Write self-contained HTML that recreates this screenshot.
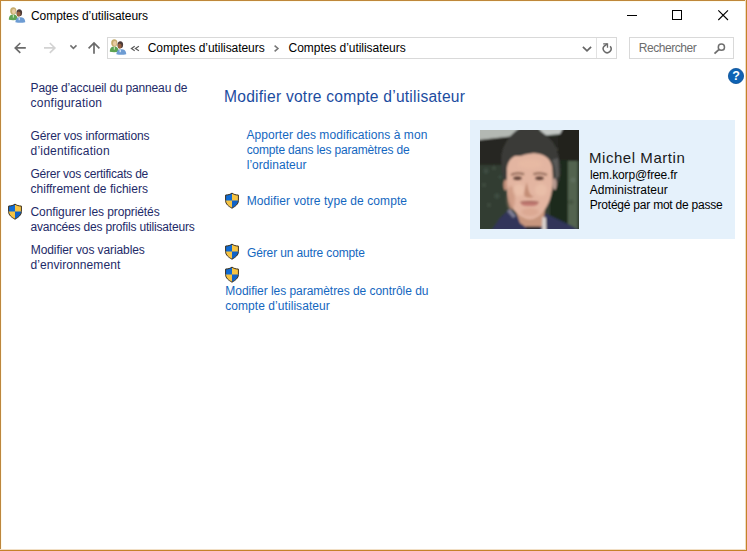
<!DOCTYPE html>
<html lang="fr"><head><meta charset="utf-8"><title>Comptes d’utilisateurs</title>
<style>
html,body{margin:0;padding:0;background:#fff;}
body{width:747px;height:551px;position:relative;overflow:hidden;font-family:"Liberation Sans",sans-serif;font-size:12px;color:#000;}
.t{position:absolute;white-space:nowrap;}
.abs{position:absolute;}
svg{position:absolute;overflow:visible;}
</style></head><body>
<!-- window frame -->
<div class="abs" style="left:0;top:0;width:747px;height:1px;background:#bf873a;"></div>
<div class="abs" style="left:0;top:0;width:1px;height:551px;background:#bd863c;"></div>
<div class="abs" style="left:1px;top:1px;width:745px;height:1px;background:#fffcee;"></div>
<div class="abs" style="left:1px;top:1px;width:1px;height:549px;background:#fffaea;"></div>
<div class="abs" style="left:0;top:549px;width:747px;height:1px;background:#f1dfc6;"></div>
<div class="abs" style="left:745px;top:0;width:1px;height:551px;background:#efdcc2;"></div>
<div class="abs" style="left:0;top:550px;width:747px;height:1px;background:#c5822a;"></div>
<div class="abs" style="left:746px;top:0;width:1px;height:551px;background:#c5822a;"></div>
<div class="abs" style="left:0;top:0;width:1px;height:1px;background:#d88a22;"></div>

<!-- window controls -->
<svg style="left:620px;top:0" width="127" height="30" viewBox="620 0 127 30" shape-rendering="crispEdges">
 <rect x="627" y="15" width="10" height="1" fill="#000"/>
 <rect x="672.5" y="10.5" width="9" height="9" fill="none" stroke="#000" stroke-width="1"/>
 <g shape-rendering="auto" stroke="#000" stroke-width="1.1"><path d="M718.3 10.3 L728 20 M728 10.3 L718.3 20" fill="none"/></g>
</svg>

<!-- nav arrows -->
<svg style="left:0;top:30px" width="107" height="36" viewBox="0 30 107 36" fill="none" stroke-linecap="butt" stroke-linejoin="miter">
 <path d="M25.8 47.9 H15 M20.3 43 L15.2 47.9 L20.3 52.8" stroke="#6a6a6a" stroke-width="1.6"/>
 <path d="M44 47.9 H55 M49.8 43 L54.9 47.9 L49.8 52.8" stroke="#d2d2d2" stroke-width="1.6"/>
 <path d="M70.4 45.4 L73.4 48.4 L76.5 45.4" stroke="#707070" stroke-width="1.5"/>
 <path d="M94 53.7 V43.2 M88.6 48.3 L94 43 L99.4 48.3" stroke="#6a6a6a" stroke-width="1.7"/>
</svg>

<!-- address bar -->
<div class="abs" style="left:107px;top:37px;width:508px;height:20px;border:1px solid #d9d9d9;"></div>
<div class="abs" style="left:596px;top:38px;width:1px;height:20px;background:#e2e2e2;"></div>
<div class="abs" style="left:629px;top:37px;width:103px;height:20px;border:1px solid #d9d9d9;"></div>
<svg style="left:107px;top:37px" width="640" height="22" viewBox="107 37 640 22" fill="none">
 <!-- « -->
 <path d="M134.7 46.2 L131.4 48.5 L134.7 50.8 M138.900 46.200 L135.400 48.500 L138.900 50.800" stroke="#5a5a5a" stroke-width="1.2"/>
 <!-- > -->
 <path d="M274.6 45.7 L277.900 48.500 L274.600 51.300" stroke="#777" stroke-width="1.6"/>
 <!-- dropdown v -->
 <path d="M582.9 46.800 L587 50.900 L591.100 46.800" stroke="#666" stroke-width="1.7"/>
 <!-- refresh -->
 <path d="M610.2 46.3 A3.9 3.9 0 1 1 604.3 46.1 L607.3 43.9" stroke="#6a6a6a" stroke-width="1.5"/>
 <path d="M603.2 43.8 H607.5 V47.8" stroke="#6a6a6a" stroke-width="1.3"/>
 <!-- magnifier -->
 <circle cx="721.400" cy="47.200" r="3.100" stroke="#6f6f6f" stroke-width="1.5"/>
 <path d="M719.100 49.400 L714.500 53.600" stroke="#6f6f6f" stroke-width="1.9"/>
</svg>

<!-- users icon (title) -->
<svg style="left:8px;top:6px" width="18" height="18" viewBox="0 0 18 18">
 <defs><filter id="b1" x="-20%" y="-20%" width="140%" height="140%"><feGaussianBlur stdDeviation="0.35"/></filter></defs>
 <g filter="url(#b1)">
  <path d="M0.8 13.8 C0.8 9.6 3 8.4 5.4 8.4 C8 8.4 9.6 9.8 9.6 13.8 C7 14.4 3.4 14.4 0.8 13.8 Z" fill="#5da352"/>
  <ellipse cx="5.3" cy="4.9" rx="3.1" ry="3.7" fill="#c6ad6e"/>
  <ellipse cx="5.8" cy="5.5" rx="1.8" ry="2.4" fill="#e8cba4"/>
  <rect x="4.8" y="9" width="1" height="2.6" fill="#d8efd0"/>
  <path d="M7.4 16.300 C7.400 12.400 9.600 11.200 12.200 11.200 C15 11.200 17.200 12.400 17.200 16.300 C14 17 10.600 17 7.400 16.300 Z" fill="#6d9cd3"/>
  <ellipse cx="11.300" cy="6.700" rx="2.800" ry="3.500" fill="#4c3a38"/>
  <ellipse cx="10.600" cy="8.100" rx="2" ry="2.700" fill="#98623f"/>
  <rect x="10.600" y="11.600" width="1.200" height="2.600" fill="#e4eef8"/>
 </g>
</svg>
<!-- users icon (address) -->
<svg style="left:109px;top:38px" width="18" height="18" viewBox="0 0 18 18">
 <g filter="url(#b1)">
  <path d="M0.8 13.8 C0.8 9.6 3 8.4 5.4 8.4 C8 8.4 9.6 9.8 9.6 13.8 C7 14.4 3.4 14.4 0.8 13.8 Z" fill="#5da352"/>
  <ellipse cx="5.3" cy="4.9" rx="3.1" ry="3.7" fill="#c6ad6e"/>
  <ellipse cx="5.8" cy="5.5" rx="1.8" ry="2.4" fill="#e8cba4"/>
  <rect x="4.8" y="9" width="1" height="2.6" fill="#d8efd0"/>
  <path d="M7.4 16.300 C7.400 12.400 9.600 11.200 12.200 11.200 C15 11.200 17.200 12.400 17.200 16.300 C14 17 10.600 17 7.400 16.300 Z" fill="#6d9cd3"/>
  <ellipse cx="11.300" cy="6.700" rx="2.800" ry="3.500" fill="#4c3a38"/>
  <ellipse cx="10.600" cy="8.100" rx="2" ry="2.700" fill="#98623f"/>
  <rect x="10.600" y="11.600" width="1.200" height="2.600" fill="#e4eef8"/>
 </g>
</svg>

<!-- help -->
<svg style="left:727px;top:67px" width="18" height="18" viewBox="0 0 18 18">
 <circle cx="9" cy="9" r="7.6" fill="#0f63b4" stroke="#0a4f96" stroke-width="0.8"/>
 <text x="9" y="13.4" text-anchor="middle" font-family="Liberation Sans, sans-serif" font-weight="bold" font-size="12.5" fill="#fff">?</text>
</svg>

<!-- shields -->

<svg style="left:224px;top:192.400px" width="16" height="17" viewBox="0 0 16 17">
  <path d="M8 1.1 C6.3 2.4 4.2 3 1.6 3.1 V8.6 C1.6 12 4.4 14.2 8 16.2 C11.600 14.2 14.4 12 14.4 8.6 V3.1 C11.8 3 9.7 2.4 8 1.1 Z" fill="#f7c443"/>
  <path d="M8 1.1 C6.3 2.4 4.2 3 1.6 3.1 V8.4 H8 Z" fill="#0f6bd4"/>
  <path d="M8 8.400 H14.4 V8.6 C14.4 12 11.6 14.2 8 16.2 Z" fill="#1162c8"/>
  <path d="M8 1.1 C6.3 2.4 4.2 3 1.6 3.1 V8.6 C1.6 12 4.4 14.2 8 16.2 C11.6 14.2 14.4 12 14.4 8.6 V3.100 C11.8 3 9.7 2.400 8 1.1 Z" fill="none" stroke="#3b3020" stroke-width="1"/>
 </svg>
<svg style="left:224px;top:243.400px" width="16" height="17" viewBox="0 0 16 17">
  <path d="M8 1.1 C6.3 2.4 4.2 3 1.6 3.1 V8.6 C1.6 12 4.4 14.2 8 16.2 C11.600 14.2 14.4 12 14.4 8.6 V3.1 C11.8 3 9.7 2.4 8 1.1 Z" fill="#f7c443"/>
  <path d="M8 1.1 C6.3 2.4 4.2 3 1.6 3.1 V8.4 H8 Z" fill="#0f6bd4"/>
  <path d="M8 8.400 H14.4 V8.6 C14.4 12 11.6 14.2 8 16.2 Z" fill="#1162c8"/>
  <path d="M8 1.1 C6.3 2.4 4.2 3 1.6 3.1 V8.6 C1.6 12 4.4 14.2 8 16.2 C11.6 14.2 14.4 12 14.4 8.6 V3.100 C11.8 3 9.7 2.400 8 1.1 Z" fill="none" stroke="#3b3020" stroke-width="1"/>
 </svg>
<svg style="left:224px;top:266.300px" width="16" height="17" viewBox="0 0 16 17">
  <path d="M8 1.1 C6.3 2.4 4.2 3 1.6 3.1 V8.6 C1.6 12 4.4 14.2 8 16.2 C11.600 14.2 14.4 12 14.4 8.6 V3.1 C11.8 3 9.7 2.4 8 1.1 Z" fill="#f7c443"/>
  <path d="M8 1.1 C6.3 2.4 4.2 3 1.6 3.1 V8.4 H8 Z" fill="#0f6bd4"/>
  <path d="M8 8.400 H14.4 V8.6 C14.4 12 11.6 14.2 8 16.2 Z" fill="#1162c8"/>
  <path d="M8 1.1 C6.3 2.4 4.2 3 1.6 3.1 V8.6 C1.6 12 4.4 14.2 8 16.2 C11.6 14.2 14.4 12 14.4 8.6 V3.100 C11.8 3 9.7 2.400 8 1.1 Z" fill="none" stroke="#3b3020" stroke-width="1"/>
 </svg>
<svg style="left:7px;top:203px" width="16" height="17" viewBox="0 0 16 17">
  <path d="M8 1.1 C6.3 2.4 4.2 3 1.6 3.1 V8.6 C1.6 12 4.4 14.2 8 16.2 C11.600 14.2 14.4 12 14.4 8.6 V3.1 C11.8 3 9.7 2.4 8 1.1 Z" fill="#f7c443"/>
  <path d="M8 1.1 C6.3 2.4 4.2 3 1.6 3.1 V8.4 H8 Z" fill="#0f6bd4"/>
  <path d="M8 8.400 H14.4 V8.6 C14.4 12 11.6 14.2 8 16.2 Z" fill="#1162c8"/>
  <path d="M8 1.1 C6.3 2.4 4.2 3 1.6 3.1 V8.6 C1.6 12 4.4 14.2 8 16.2 C11.6 14.2 14.4 12 14.4 8.6 V3.100 C11.8 3 9.7 2.400 8 1.1 Z" fill="none" stroke="#3b3020" stroke-width="1"/>
 </svg>

<!-- user card -->
<div class="abs" style="left:470px;top:120px;width:265px;height:119px;background:#e5f1fb;"></div>
<svg style="left:480px;top:130px;overflow:hidden" width="99" height="99" viewBox="0 0 99 99">
 <defs>
  <filter id="pb" x="-10%" y="-10%" width="120%" height="120%"><feGaussianBlur stdDeviation="0.9"/></filter>
  <filter id="pb2" x="-30%" y="-30%" width="160%" height="160%"><feGaussianBlur stdDeviation="1.8"/></filter>
  <clipPath id="pc"><rect x="0" y="0" width="99" height="99"/></clipPath>
 </defs>
 <rect width="99" height="99" fill="#2f3b32"/>
 <g clip-path="url(#pc)"><g filter="url(#pb)">
  <!-- background -->
  <rect x="-5" y="-5" width="109" height="109" fill="#303c33"/>
  <rect x="-5" y="6" width="109" height="29" fill="#272821"/>
  <rect x="78" y="-5" width="30" height="38" fill="#23221e"/>
  <path d="M-5 -5 H44 L30 6.500 L-5 10.500 Z" fill="#b3b8b3"/>
  <path d="M56 -5 H85 L80 4 L64 5.500 Z" fill="#c3c7c4"/>
  <rect x="70" y="30" width="18" height="75" fill="#1e2a1f"/>
  <rect x="88" y="31" width="10" height="75" fill="#53634f"/>
  <rect x="97.500" y="31" width="6" height="75" fill="#2c372c"/>
  <g fill="#48584a" opacity="0.6">
   <circle cx="6" cy="41" r="2.600"/><circle cx="14" cy="38" r="2"/><circle cx="4" cy="55" r="2"/>
   <circle cx="17" cy="66" r="2.800"/><circle cx="9" cy="75" r="2"/><circle cx="20" cy="47" r="1.800"/>
   <circle cx="93" cy="50" r="2.500" fill="#68786a"/><circle cx="91" cy="72" r="2.500" fill="#3e4c3c"/>
  </g>
  <!-- clothing -->
  <path d="M9 104 L20 88 L29 79.500 L42 90 L60 90 L65.500 83.500 L93 96.500 L104 104 Z" fill="#30365a"/>
  <path d="M27 81 L30.500 79 L36 86 L33 88 Z" fill="#7c7c94"/>
  <!-- neck -->
  <path d="M34 76 L65 76 L63.500 96 L50 100 L40 93 Z" fill="#c8967e"/>
  <path d="M62.300 87 L66 87.500 L66.500 104 L62 104 Z" fill="#dad2ce"/>
  <path d="M46 96.500 H60 V104 H46 Z" fill="#2b2b36"/>
  <!-- hair -->
  <path d="M25 53 C22.500 47 21 38 21.200 29 C21.500 19 26 7 40 -2 L56 -2 C62 2 68 6 72 11 C76 16 78 23 79.500 31 C80.800 38 80.500 46 78.500 53 L71 50 L70 30 L30 30 L27 50 Z" fill="#3b3b39"/>
  <!-- ears -->
  <ellipse cx="25.600" cy="55" rx="2.200" ry="5.500" fill="#c4917c"/>
  <ellipse cx="74.600" cy="54" rx="2.200" ry="6" fill="#b89a90"/>
  <!-- face -->
  <path d="M27 42 C26 28 36 23 50 23 C64 23 73 28 72.500 42 C73.500 55 72 67 67 76 C62 85 55 89.500 50 89.500 C44 89.500 36 84 31 76 C27.500 68 26.500 55 27 42 Z" fill="#e3b5a1"/>
  <!-- hairline -->
  <path d="M24 44 C24.500 34 26 28 30 27 C34 25 38 27 42 25.500 C46 24 50 24 54 23 C60 23 66 24.500 70 28 C72 31 73 35 73.500 40 L78 18 L50 6 L23 18 Z" fill="#3b3b39"/>
  <path d="M72 30 C75 36 76 44 75.500 50 L79 46 L78 28 Z" fill="#5a5a58"/>
 </g>
 <g filter="url(#pb2)">
  <!-- shading -->
  <ellipse cx="31" cy="68" rx="4" ry="12" fill="#c9937c" opacity="0.7"/>
  <ellipse cx="39" cy="60" rx="6" ry="6" fill="#edc4ae" opacity="0.7"/>
  <ellipse cx="61" cy="60" rx="6" ry="6" fill="#edc4ae" opacity="0.6"/>
  <ellipse cx="50" cy="34" rx="12" ry="5" fill="#e8bba4" opacity="0.7"/>
  <ellipse cx="50" cy="82" rx="9" ry="4" fill="#d9a58e" opacity="0.8"/>
 </g>
 <g filter="url(#pb)">
  <!-- brows / eyes -->
  <path d="M31 44.800 Q37 41.800 44 44.300" stroke="#7a5444" stroke-width="2" fill="none" opacity="0.75"/>
  <path d="M53.500 44.300 Q60 41.800 67 44.800" stroke="#7a5444" stroke-width="2" fill="none" opacity="0.75"/>
  <ellipse cx="37.500" cy="48.300" rx="4.200" ry="1.700" fill="#5c3c32"/>
  <ellipse cx="59.500" cy="48.300" rx="4.200" ry="1.700" fill="#5c3c32"/>
  <!-- nose -->
  <path d="M47 52 C45 58 44 63 44.500 66 C47 68 52 68 54 66.500 C50 66 48 62 47 52 Z" fill="#bd866e" opacity="0.85"/>
  <!-- mouth -->
  <ellipse cx="49.500" cy="73.800" rx="8.500" ry="2.300" fill="#c27a72"/>
  <path d="M40.500 72.300 Q49.500 70.800 58.500 72.300" stroke="#985a52" stroke-width="1.300" fill="none"/>
 </g></g>
</svg>


<span class="t" style="left:31.00px;top:9px;font-size:12px;line-height:15px;letter-spacing:-0.050px;color:#000;">Comptes d’utilisateurs</span>
<span class="t" style="left:147.70px;top:41px;font-size:12px;line-height:15px;letter-spacing:-0.050px;color:#000;">Comptes d’utilisateurs</span>
<span class="t" style="left:288.60px;top:41px;font-size:12px;line-height:15px;letter-spacing:-0.045px;color:#000;">Comptes d’utilisateurs</span>
<span class="t" style="left:638.70px;top:41px;font-size:12px;line-height:15px;letter-spacing:-0.437px;color:#6d6d6d;">Rechercher</span>
<span class="t" style="left:30.60px;top:81px;font-size:12px;line-height:15px;letter-spacing:-0.170px;color:#1e2a68;">Page d’accueil du panneau de</span>
<span class="t" style="left:30.60px;top:96px;font-size:12px;line-height:15px;letter-spacing:0.222px;color:#1e2a68;">configuration</span>
<span class="t" style="left:30.50px;top:129px;font-size:12px;line-height:15px;letter-spacing:-0.113px;color:#1e2a68;">Gérer vos informations</span>
<span class="t" style="left:30.50px;top:144px;font-size:12px;line-height:15px;letter-spacing:0.208px;color:#1e2a68;">d’identification</span>
<span class="t" style="left:30.50px;top:167px;font-size:12px;line-height:15px;letter-spacing:-0.244px;color:#1e2a68;">Gérer vos certificats de</span>
<span class="t" style="left:30.50px;top:182px;font-size:12px;line-height:15px;letter-spacing:0.015px;color:#1e2a68;">chiffrement de fichiers</span>
<span class="t" style="left:30.50px;top:205px;font-size:12px;line-height:15px;letter-spacing:-0.092px;color:#1e2a68;">Configurer les propriétés</span>
<span class="t" style="left:30.50px;top:220px;font-size:12px;line-height:15px;letter-spacing:-0.181px;color:#1e2a68;">avancées des profils utilisateurs</span>
<span class="t" style="left:30.80px;top:243px;font-size:12px;line-height:15px;letter-spacing:-0.097px;color:#1e2a68;">Modifier vos variables</span>
<span class="t" style="left:30.50px;top:258px;font-size:12px;line-height:15px;letter-spacing:0.072px;color:#1e2a68;">d’environnement</span>
<span class="t" style="left:224.10px;top:87px;font-size:15.6px;line-height:20px;letter-spacing:0.225px;color:#1c4c9f;">Modifier votre compte d’utilisateur</span>
<span class="t" style="left:246.40px;top:128px;font-size:12px;line-height:15px;letter-spacing:0.071px;color:#1467c0;">Apporter des modifications à mon</span>
<span class="t" style="left:246.70px;top:143px;font-size:12px;line-height:15px;letter-spacing:-0.183px;color:#1467c0;">compte dans les paramètres de</span>
<span class="t" style="left:246.70px;top:158px;font-size:12px;line-height:15px;letter-spacing:0.039px;color:#1467c0;">l’ordinateur</span>
<span class="t" style="left:246.80px;top:194px;font-size:12px;line-height:15px;letter-spacing:0.075px;color:#1467c0;">Modifier votre type de compte</span>
<span class="t" style="left:247.00px;top:246px;font-size:12px;line-height:15px;letter-spacing:-0.138px;color:#1467c0;">Gérer un autre compte</span>
<span class="t" style="left:225.30px;top:284px;font-size:12px;line-height:15px;letter-spacing:-0.043px;color:#1467c0;">Modifier les paramètres de contrôle du</span>
<span class="t" style="left:225.20px;top:299px;font-size:12px;line-height:15px;letter-spacing:0.064px;color:#1467c0;">compte d’utilisateur</span>
<span class="t" style="left:589.00px;top:148px;font-size:15px;line-height:20px;letter-spacing:0.546px;color:#1a1a1a;">Michel Martin</span>
<span class="t" style="left:590.00px;top:168px;font-size:12px;line-height:15px;letter-spacing:-0.136px;color:#000;">lem.korp@free.fr</span>
<span class="t" style="left:589.80px;top:183px;font-size:12px;line-height:15px;letter-spacing:0.049px;color:#000;">Administrateur</span>
<span class="t" style="left:589.80px;top:198px;font-size:12px;line-height:15px;letter-spacing:-0.226px;color:#000;">Protégé par mot de passe</span>
</body></html>
